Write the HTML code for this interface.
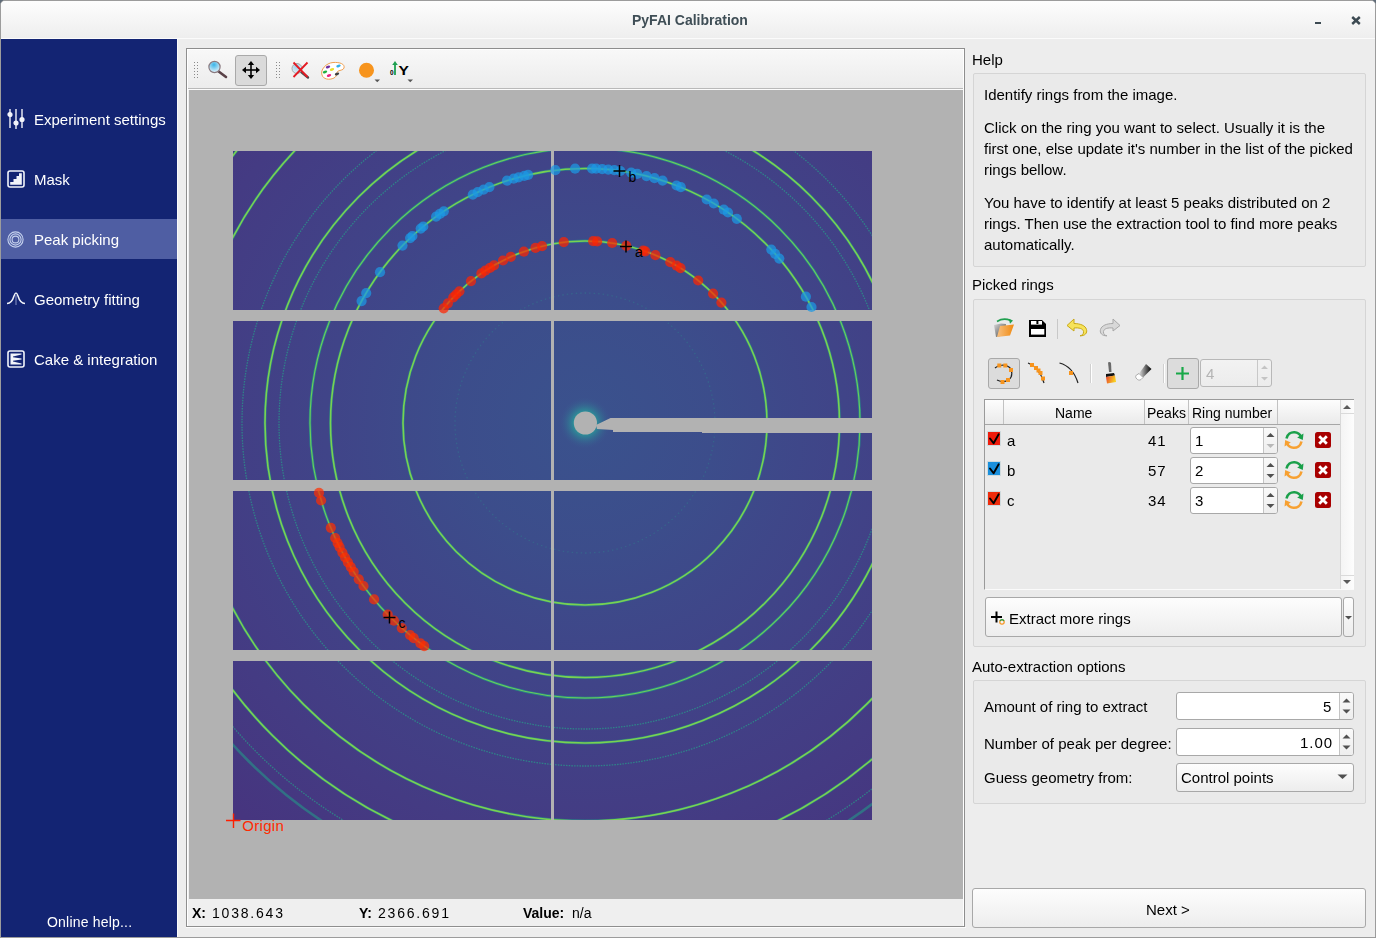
<!DOCTYPE html><html><head><meta charset="utf-8"><style>
html,body{margin:0;padding:0;}
body{width:1376px;height:938px;overflow:hidden;position:relative;background:#ededed;font-family:"Liberation Sans", sans-serif;}
.a{position:absolute;box-sizing:border-box;}
.t{position:absolute;white-space:pre;will-change:transform;}
svg{position:absolute;overflow:visible;}
</style></head><body>
<div class="a" style="left:0px;top:0px;width:1376px;height:938px;background:#5f6b78;"></div>
<div class="a" style="left:0px;top:0px;width:1376px;height:938px;background:#ededed;border:1px solid #9c9c9c;border-radius:5px 5px 0 0;"></div>
<div class="a" style="left:1px;top:1px;width:1374px;height:38px;background:linear-gradient(#fdfdfd,#eeeeee);border-radius:4px 4px 0 0;border-bottom:1px solid #fbfbfb;"></div>
<div class="t " style="left:632px;top:13.15px;font-size:14px;line-height:14px;color:#3f4e56;font-weight:bold;">PyFAI Calibration</div>
<div class="a" style="left:1315px;top:22px;width:6px;height:2px;background:#3c4a52;"></div>
<svg style="left:1351px;top:16px" width="10" height="9" viewBox="0 0 10 9"><path d="M1.2 1 L8.8 8 M8.8 1 L1.2 8" stroke="#3c4a52" stroke-width="2.4"/></svg>
<div class="a" style="left:1px;top:39px;width:176px;height:898px;background:#132473;"></div>
<div class="a" style="left:177px;top:39px;width:1px;height:898px;background:#fafafa;"></div>
<div class="a" style="left:1px;top:219px;width:176px;height:40px;background:#4f5ea3;"></div>
<div class="t " style="left:34px;top:112.30px;font-size:15px;line-height:15px;color:#ffffff;">Experiment settings</div>
<div class="t " style="left:34px;top:172.30px;font-size:15px;line-height:15px;color:#ffffff;">Mask</div>
<div class="t " style="left:34px;top:232.30px;font-size:15px;line-height:15px;color:#ffffff;">Peak picking</div>
<div class="t " style="left:34px;top:292.30px;font-size:15px;line-height:15px;color:#ffffff;">Geometry fitting</div>
<div class="t " style="left:34px;top:352.30px;font-size:15px;line-height:15px;color:#ffffff;">Cake &amp; integration</div>
<div class="t " style="left:47px;top:915.15px;font-size:14px;line-height:14px;color:#ffffff;letter-spacing:0.2px;">Online help...</div>
<svg style="left:7px;top:108px" width="18" height="22" viewBox="0 0 18 22">
<g stroke="#f2f4fa" stroke-width="1.4" fill="#f2f4fa">
<line x1="3" y1="1" x2="3" y2="20"/><line x1="9" y1="1" x2="9" y2="21"/><line x1="15" y1="1" x2="15" y2="20"/>
<circle cx="3" cy="6.5" r="1.9"/><circle cx="9" cy="15" r="1.9"/><circle cx="15" cy="11.5" r="1.9"/></g></svg>
<svg style="left:7px;top:170px" width="18" height="18" viewBox="0 0 18 18">
<rect x="1" y="1" width="16" height="16" rx="2" fill="none" stroke="#f2f4fa" stroke-width="1.6"/>
<path d="M3.2 14.8 L3.2 12 L6.5 12 L6.5 9 L9.5 9 L9.5 6 L12 6 L12 3.2 L14.8 3.2 L14.8 14.8 Z" fill="#f2f4fa"/></svg>
<svg style="left:7px;top:231px" width="17" height="17" viewBox="0 0 17 17">
<g fill="none" stroke="#c6d2ee" stroke-width="1.1"><circle cx="8.5" cy="8.5" r="7.6"/><circle cx="8.5" cy="8.5" r="5.6"/><circle cx="8.5" cy="8.5" r="3.4"/></g></svg>
<svg style="left:6px;top:291px" width="20" height="16" viewBox="0 0 20 16">
<path d="M1 12.5 C5 12.5 6.5 10 8 5 C9 2 9.5 2 10 2 C10.5 2 11 2 12 5 C13.5 10 15 12.5 19 12.5" fill="none" stroke="#f2f4fa" stroke-width="1.5"/>
<line x1="10" y1="4" x2="10" y2="14" stroke="#8a95c8" stroke-width="1"/></svg>
<svg style="left:7px;top:350px" width="18" height="18" viewBox="0 0 18 18">
<rect x="1" y="1" width="16" height="16" rx="2" fill="none" stroke="#f2f4fa" stroke-width="1.6"/>
<g fill="#f2f4fa"><rect x="3.5" y="3.5" width="2.5" height="11"/><path d="M6 3.5 L14.5 3.5 L14.5 4.6 L6 6.4 Z"/><path d="M6 7.2 L14.5 8.5 L14.5 9.5 L6 10.8 Z"/><path d="M6 11.6 L14.5 13.4 L14.5 14.5 L6 14.5 Z"/></g></svg>
<div class="a" style="left:186px;top:48px;width:779px;height:879px;border:1px solid #8e8e8e;background:#efefef;"></div>
<div class="a" style="left:187px;top:49px;width:777px;height:877px;border:1px solid #ffffff;border-bottom:none;"></div>
<div class="a" style="left:186px;top:927px;width:780px;height:1px;background:#fcfcfc;"></div>
<div class="a" style="left:188px;top:50px;width:775px;height:38px;background:linear-gradient(#f8f8f8,#ececec);"></div>
<div class="a" style="left:188px;top:88px;width:775px;height:1px;background:#b9b9b9;"></div>
<div class="a" style="left:188px;top:89px;width:775px;height:1px;background:#fbfbfb;"></div>
<div class="a" style="left:189px;top:90px;width:774px;height:809px;background:#b2b2b2;"></div>
<div class="a" style="left:194px;top:62px;width:1px;height:1px;background:#8a8a8a;"></div>
<div class="a" style="left:197px;top:62px;width:1px;height:1px;background:#8a8a8a;"></div>
<div class="a" style="left:194px;top:65px;width:1px;height:1px;background:#8a8a8a;"></div>
<div class="a" style="left:197px;top:65px;width:1px;height:1px;background:#8a8a8a;"></div>
<div class="a" style="left:194px;top:68px;width:1px;height:1px;background:#8a8a8a;"></div>
<div class="a" style="left:197px;top:68px;width:1px;height:1px;background:#8a8a8a;"></div>
<div class="a" style="left:194px;top:71px;width:1px;height:1px;background:#8a8a8a;"></div>
<div class="a" style="left:197px;top:71px;width:1px;height:1px;background:#8a8a8a;"></div>
<div class="a" style="left:194px;top:74px;width:1px;height:1px;background:#8a8a8a;"></div>
<div class="a" style="left:197px;top:74px;width:1px;height:1px;background:#8a8a8a;"></div>
<div class="a" style="left:194px;top:77px;width:1px;height:1px;background:#8a8a8a;"></div>
<div class="a" style="left:197px;top:77px;width:1px;height:1px;background:#8a8a8a;"></div>
<div class="a" style="left:276px;top:62px;width:1px;height:1px;background:#8a8a8a;"></div>
<div class="a" style="left:279px;top:62px;width:1px;height:1px;background:#8a8a8a;"></div>
<div class="a" style="left:276px;top:65px;width:1px;height:1px;background:#8a8a8a;"></div>
<div class="a" style="left:279px;top:65px;width:1px;height:1px;background:#8a8a8a;"></div>
<div class="a" style="left:276px;top:68px;width:1px;height:1px;background:#8a8a8a;"></div>
<div class="a" style="left:279px;top:68px;width:1px;height:1px;background:#8a8a8a;"></div>
<div class="a" style="left:276px;top:71px;width:1px;height:1px;background:#8a8a8a;"></div>
<div class="a" style="left:279px;top:71px;width:1px;height:1px;background:#8a8a8a;"></div>
<div class="a" style="left:276px;top:74px;width:1px;height:1px;background:#8a8a8a;"></div>
<div class="a" style="left:279px;top:74px;width:1px;height:1px;background:#8a8a8a;"></div>
<div class="a" style="left:276px;top:77px;width:1px;height:1px;background:#8a8a8a;"></div>
<div class="a" style="left:279px;top:77px;width:1px;height:1px;background:#8a8a8a;"></div>
<div class="a" style="left:235px;top:55px;width:32px;height:31px;background:#dadada;border:1px solid #a9a9a9;border-radius:3px;"></div>
<svg style="left:206px;top:58px" width="24" height="22" viewBox="0 0 24 22">
<defs><radialGradient id="mg" cx="0.45" cy="0.3" r="0.7"><stop offset="0" stop-color="#3ab4e8"/><stop offset="1" stop-color="#e8f4fb"/></radialGradient></defs>
<line x1="12" y1="13" x2="20" y2="19" stroke="#5a4248" stroke-width="2.6" stroke-linecap="round"/>
<circle cx="8.5" cy="9" r="5.6" fill="url(#mg)" stroke="#8a7a80" stroke-width="1.2"/></svg>
<svg style="left:241px;top:60px" width="20" height="20" viewBox="0 0 20 20">
<g stroke="#000" stroke-width="1.6"><line x1="10" y1="3" x2="10" y2="17"/><line x1="3" y1="10" x2="17" y2="10"/></g>
<g fill="#000"><path d="M10 1 L13.2 5 L6.8 5 Z"/><path d="M10 19 L13.2 15 L6.8 15 Z"/><path d="M1 10 L5 6.8 L5 13.2 Z"/><path d="M19 10 L15 6.8 L15 13.2 Z"/></g></svg>
<svg style="left:290px;top:60px" width="22" height="22" viewBox="0 0 22 22">
<defs><radialGradient id="mg2" cx="0.45" cy="0.3" r="0.7"><stop offset="0" stop-color="#9cd0ec"/><stop offset="1" stop-color="#e6f0f6"/></radialGradient></defs>
<line x1="10" y1="11" x2="18" y2="17.5" stroke="#4a4a4a" stroke-width="2.4" stroke-linecap="round"/>
<circle cx="7" cy="8.5" r="5" fill="url(#mg2)" stroke="#a8a8a8" stroke-width="1"/>
<path d="M3.5 2.5 L17.5 17 M17.5 2.5 L3.5 17" stroke="#e41b23" stroke-width="1.8"/></svg>
<svg style="left:320px;top:61px" width="26" height="20" viewBox="0 0 26 20">
<path d="M2 14 C0 9 6 2 13 1.5 C20 1 25 3 24 7 C23.5 9.5 19 9 17.5 10.5 C16 12 18 14.5 14 17 C9 19.5 3 18 2 14 Z" fill="#fff" stroke="#f0a050" stroke-width="1"/>
<ellipse cx="8" cy="6" rx="2.3" ry="1.2" fill="#7030a0" transform="rotate(-20 8 6)"/>
<ellipse cx="18.5" cy="5" rx="2.3" ry="1.2" fill="#30b0e8" transform="rotate(-20 18.5 5)"/>
<ellipse cx="12" cy="8.5" rx="2.3" ry="1.2" fill="#e8e030" transform="rotate(-20 12 8.5)"/>
<ellipse cx="5" cy="11" rx="2.3" ry="1.2" fill="#20b040" transform="rotate(-20 5 11)"/>
<ellipse cx="17" cy="13" rx="2.3" ry="1.2" fill="#404040" transform="rotate(-20 17 13)"/>
<ellipse cx="9" cy="14.5" rx="2.3" ry="1.2" fill="#e82080" transform="rotate(-20 9 14.5)"/></svg>
<svg style="left:356px;top:60px" width="30" height="26" viewBox="0 0 30 26">
<circle cx="10.5" cy="10.3" r="7.5" fill="#f7941d"/>
<path d="M18.5 19.5 L24 19.5 L21.25 22.3 Z" fill="#555"/></svg>
<svg style="left:386px;top:58px" width="30" height="28" viewBox="0 0 30 28">
<text x="3.9" y="17" font-family="Liberation Sans" font-size="6.5" font-weight="bold" fill="#000">0</text>
<line x1="9" y1="6" x2="9" y2="17" stroke="#1ea050" stroke-width="1.8"/><path d="M9 3 L11.8 7 L6.2 7 Z" fill="#1ea050"/>
<text transform="translate(12.6 17.2) scale(1.2 1)" x="0" y="0" font-family="Liberation Sans" font-size="13" font-weight="bold" fill="#000">Y</text>
<path d="M21.5 21.5 L27 21.5 L24.25 24.3 Z" fill="#555"/></svg>
<div class="t " style="left:192px;top:906.15px;font-size:14px;line-height:14px;color:#000;font-weight:bold;">X:</div>
<div class="t " style="left:212px;top:906.15px;font-size:14px;line-height:14px;color:#000;letter-spacing:1.8px;">1038.643</div>
<div class="t " style="left:359px;top:906.15px;font-size:14px;line-height:14px;color:#000;font-weight:bold;">Y:</div>
<div class="t " style="left:378px;top:906.15px;font-size:14px;line-height:14px;color:#000;letter-spacing:1.8px;">2366.691</div>
<div class="t " style="left:523px;top:906.15px;font-size:14px;line-height:14px;color:#000;font-weight:bold;">Value:</div>
<div class="t " style="left:572px;top:906.15px;font-size:14px;line-height:14px;color:#000;">n/a</div>
<svg style="left:189px;top:90px" width="774" height="809" viewBox="189 90 774 809">
<defs>
<clipPath id="pan"><rect x="233" y="151" width="318" height="159"/><rect x="233" y="321" width="318" height="159"/><rect x="233" y="491" width="318" height="159"/><rect x="233" y="661" width="318" height="159"/><rect x="554" y="151" width="318" height="159"/><rect x="554" y="321" width="318" height="159"/><rect x="554" y="491" width="318" height="159"/><rect x="554" y="661" width="318" height="159"/></clipPath>
<radialGradient id="bgg" gradientUnits="userSpaceOnUse" cx="585" cy="423" r="520"><stop offset="0" stop-color="#3a528d"/><stop offset="0.25" stop-color="#3c4d8b"/><stop offset="0.5" stop-color="#404488"/><stop offset="0.8" stop-color="#443b83"/><stop offset="1" stop-color="#46357f"/></radialGradient>
<radialGradient id="glow" gradientUnits="userSpaceOnUse" cx="585" cy="423" r="26"><stop offset="0.3" stop-color="#36c0a8" stop-opacity="1"/><stop offset="0.45" stop-color="#2a9a9a" stop-opacity="0.8"/><stop offset="1" stop-color="#3c5690" stop-opacity="0"/></radialGradient>
</defs>
<g clip-path="url(#pan)">
<rect x="233" y="151" width="639" height="669" fill="url(#bgg)"/>
<circle cx="585" cy="423" r="130" fill="none" stroke="#2a9a8e" stroke-width="1.3" stroke-opacity="0.28" stroke-dasharray="1.5 3"/>
<circle cx="585" cy="423" r="182" fill="none" stroke="#1f9e89" stroke-width="2.8" stroke-opacity="0.6"/>
<circle cx="585" cy="423" r="182" fill="none" stroke="#7ad151" stroke-width="1.6"/>
<circle cx="585" cy="423" r="254.5" fill="none" stroke="#1f9e89" stroke-width="2.8" stroke-opacity="0.6"/>
<circle cx="585" cy="423" r="254.5" fill="none" stroke="#7ad151" stroke-width="1.6"/>
<circle cx="585" cy="423" r="275" fill="none" stroke="#1fa088" stroke-width="2.6" stroke-opacity="0.7"/>
<circle cx="585" cy="423" r="275" fill="none" stroke="#6ccd5a" stroke-width="1.1"/>
<circle cx="585" cy="423" r="306" fill="none" stroke="#26a08a" stroke-width="1.3" stroke-opacity="0.7" stroke-dasharray="1.5 1.2"/>
<circle cx="585" cy="423" r="320" fill="none" stroke="#1f9e89" stroke-width="2.8" stroke-opacity="0.6"/>
<circle cx="585" cy="423" r="320" fill="none" stroke="#7ad151" stroke-width="1.6"/>
<circle cx="585" cy="423" r="343" fill="none" stroke="#26a08a" stroke-width="1.3" stroke-opacity="0.7" stroke-dasharray="1.5 1.2"/>
<circle cx="585" cy="423" r="398" fill="none" stroke="#1f9e89" stroke-width="2.8" stroke-opacity="0.6"/>
<circle cx="585" cy="423" r="398" fill="none" stroke="#7ad151" stroke-width="1.6"/>
<circle cx="585" cy="423" r="442" fill="none" stroke="#1f9e89" stroke-width="2.8" stroke-opacity="0.6"/>
<circle cx="585" cy="423" r="442" fill="none" stroke="#7ad151" stroke-width="1.6"/>
<circle cx="585" cy="423" r="465" fill="none" stroke="#26a08a" stroke-width="1.3" stroke-opacity="0.7" stroke-dasharray="1.5 1.2"/>
<circle cx="585" cy="423" r="477" fill="none" stroke="#20a088" stroke-width="2.6" stroke-opacity="0.55"/>
<circle cx="585" cy="423" r="26" fill="url(#glow)"/>
<circle cx="585.4" cy="423" r="11.6" fill="#b2b2b2"/>
<path d="M596 425 L610.5 418 L872 418 L872 433 L702 433 L702 432 L613 432 L613 430 L597 429 Z" fill="#b2b2b2"/>
</g>
<circle cx="361.6" cy="301.1" r="5.1" fill="#1c98e4" fill-opacity="0.72"/>
<circle cx="366.2" cy="293.1" r="5.1" fill="#1c98e4" fill-opacity="0.72"/>
<circle cx="380.0" cy="272.2" r="5.1" fill="#1c98e4" fill-opacity="0.72"/>
<circle cx="402.5" cy="245.6" r="5.1" fill="#1c98e4" fill-opacity="0.72"/>
<circle cx="410.1" cy="238.1" r="5.1" fill="#1c98e4" fill-opacity="0.72"/>
<circle cx="412.4" cy="236.0" r="5.1" fill="#1c98e4" fill-opacity="0.72"/>
<circle cx="420.7" cy="228.6" r="5.1" fill="#1c98e4" fill-opacity="0.72"/>
<circle cx="423.3" cy="226.5" r="5.1" fill="#1c98e4" fill-opacity="0.72"/>
<circle cx="436.1" cy="216.6" r="5.1" fill="#1c98e4" fill-opacity="0.72"/>
<circle cx="439.9" cy="213.9" r="5.1" fill="#1c98e4" fill-opacity="0.72"/>
<circle cx="443.8" cy="211.3" r="5.1" fill="#1c98e4" fill-opacity="0.72"/>
<circle cx="472.8" cy="194.6" r="5.1" fill="#1c98e4" fill-opacity="0.72"/>
<circle cx="477.7" cy="192.2" r="5.1" fill="#1c98e4" fill-opacity="0.72"/>
<circle cx="483.6" cy="189.6" r="5.1" fill="#1c98e4" fill-opacity="0.72"/>
<circle cx="489.4" cy="187.1" r="5.1" fill="#1c98e4" fill-opacity="0.72"/>
<circle cx="507.0" cy="180.7" r="5.1" fill="#1c98e4" fill-opacity="0.72"/>
<circle cx="513.7" cy="178.7" r="5.1" fill="#1c98e4" fill-opacity="0.72"/>
<circle cx="518.6" cy="177.3" r="5.1" fill="#1c98e4" fill-opacity="0.72"/>
<circle cx="524.3" cy="175.9" r="5.1" fill="#1c98e4" fill-opacity="0.72"/>
<circle cx="528.1" cy="174.9" r="5.1" fill="#1c98e4" fill-opacity="0.72"/>
<circle cx="555.4" cy="170.2" r="5.1" fill="#1c98e4" fill-opacity="0.72"/>
<circle cx="575.1" cy="168.7" r="5.1" fill="#1c98e4" fill-opacity="0.72"/>
<circle cx="592.1" cy="168.6" r="5.1" fill="#1c98e4" fill-opacity="0.72"/>
<circle cx="596.1" cy="168.7" r="5.1" fill="#1c98e4" fill-opacity="0.72"/>
<circle cx="602.2" cy="169.1" r="5.1" fill="#1c98e4" fill-opacity="0.72"/>
<circle cx="608.3" cy="169.6" r="5.1" fill="#1c98e4" fill-opacity="0.72"/>
<circle cx="614.3" cy="170.2" r="5.1" fill="#1c98e4" fill-opacity="0.72"/>
<circle cx="620.3" cy="171.0" r="5.1" fill="#1c98e4" fill-opacity="0.72"/>
<circle cx="631.2" cy="172.7" r="5.1" fill="#1c98e4" fill-opacity="0.72"/>
<circle cx="637.2" cy="173.9" r="5.1" fill="#1c98e4" fill-opacity="0.72"/>
<circle cx="646.5" cy="176.1" r="5.1" fill="#1c98e4" fill-opacity="0.72"/>
<circle cx="654.5" cy="178.2" r="5.1" fill="#1c98e4" fill-opacity="0.72"/>
<circle cx="662.6" cy="180.6" r="5.1" fill="#1c98e4" fill-opacity="0.72"/>
<circle cx="676.5" cy="185.5" r="5.1" fill="#1c98e4" fill-opacity="0.72"/>
<circle cx="680.8" cy="187.2" r="5.1" fill="#1c98e4" fill-opacity="0.72"/>
<circle cx="706.7" cy="199.5" r="5.1" fill="#1c98e4" fill-opacity="0.72"/>
<circle cx="713.8" cy="203.5" r="5.1" fill="#1c98e4" fill-opacity="0.72"/>
<circle cx="723.8" cy="209.7" r="5.1" fill="#1c98e4" fill-opacity="0.72"/>
<circle cx="728.0" cy="212.5" r="5.1" fill="#1c98e4" fill-opacity="0.72"/>
<circle cx="736.8" cy="218.8" r="5.1" fill="#1c98e4" fill-opacity="0.72"/>
<circle cx="771.3" cy="249.6" r="5.1" fill="#1c98e4" fill-opacity="0.72"/>
<circle cx="775.1" cy="253.8" r="5.1" fill="#1c98e4" fill-opacity="0.72"/>
<circle cx="779.3" cy="258.6" r="5.1" fill="#1c98e4" fill-opacity="0.72"/>
<circle cx="805.9" cy="296.7" r="5.1" fill="#1c98e4" fill-opacity="0.72"/>
<circle cx="811.5" cy="307.0" r="5.1" fill="#1c98e4" fill-opacity="0.72"/>
<circle cx="443.7" cy="308.3" r="5.1" fill="#ff2400" fill-opacity="0.72"/>
<circle cx="447.9" cy="303.3" r="5.1" fill="#ff2400" fill-opacity="0.72"/>
<circle cx="453.3" cy="297.3" r="5.1" fill="#ff2400" fill-opacity="0.72"/>
<circle cx="456.1" cy="294.5" r="5.1" fill="#ff2400" fill-opacity="0.72"/>
<circle cx="459.4" cy="291.3" r="5.1" fill="#ff2400" fill-opacity="0.72"/>
<circle cx="471.0" cy="281.1" r="5.1" fill="#ff2400" fill-opacity="0.72"/>
<circle cx="481.4" cy="273.4" r="5.1" fill="#ff2400" fill-opacity="0.72"/>
<circle cx="485.3" cy="270.7" r="5.1" fill="#ff2400" fill-opacity="0.72"/>
<circle cx="490.0" cy="267.8" r="5.1" fill="#ff2400" fill-opacity="0.72"/>
<circle cx="494.0" cy="265.4" r="5.1" fill="#ff2400" fill-opacity="0.72"/>
<circle cx="503.0" cy="260.5" r="5.1" fill="#ff2400" fill-opacity="0.72"/>
<circle cx="510.8" cy="256.8" r="5.1" fill="#ff2400" fill-opacity="0.72"/>
<circle cx="523.9" cy="251.6" r="5.1" fill="#ff2400" fill-opacity="0.72"/>
<circle cx="535.5" cy="247.9" r="5.1" fill="#ff2400" fill-opacity="0.72"/>
<circle cx="542.1" cy="246.1" r="5.1" fill="#ff2400" fill-opacity="0.72"/>
<circle cx="563.8" cy="242.2" r="5.1" fill="#ff2400" fill-opacity="0.72"/>
<circle cx="593.2" cy="241.2" r="5.1" fill="#ff2400" fill-opacity="0.72"/>
<circle cx="597.2" cy="241.4" r="5.1" fill="#ff2400" fill-opacity="0.72"/>
<circle cx="612.2" cy="243.0" r="5.1" fill="#ff2400" fill-opacity="0.72"/>
<circle cx="626.3" cy="245.8" r="5.1" fill="#ff2400" fill-opacity="0.72"/>
<circle cx="643.2" cy="250.6" r="5.1" fill="#ff2400" fill-opacity="0.72"/>
<circle cx="645.3" cy="251.3" r="5.1" fill="#ff2400" fill-opacity="0.72"/>
<circle cx="655.4" cy="255.2" r="5.1" fill="#ff2400" fill-opacity="0.72"/>
<circle cx="670.3" cy="262.2" r="5.1" fill="#ff2400" fill-opacity="0.72"/>
<circle cx="676.6" cy="265.7" r="5.1" fill="#ff2400" fill-opacity="0.72"/>
<circle cx="680.5" cy="268.1" r="5.1" fill="#ff2400" fill-opacity="0.72"/>
<circle cx="698.2" cy="280.5" r="5.1" fill="#ff2400" fill-opacity="0.72"/>
<circle cx="713.1" cy="293.7" r="5.1" fill="#ff2400" fill-opacity="0.72"/>
<circle cx="721.4" cy="302.6" r="5.1" fill="#ff2400" fill-opacity="0.72"/>
<circle cx="319.0" cy="492.8" r="5.1" fill="#ff2e00" fill-opacity="0.72"/>
<circle cx="321.1" cy="500.5" r="5.1" fill="#ff2e00" fill-opacity="0.72"/>
<circle cx="330.8" cy="527.8" r="5.1" fill="#ff2e00" fill-opacity="0.72"/>
<circle cx="335.2" cy="538.0" r="5.1" fill="#ff2e00" fill-opacity="0.72"/>
<circle cx="337.6" cy="543.0" r="5.1" fill="#ff2e00" fill-opacity="0.72"/>
<circle cx="339.6" cy="547.1" r="5.1" fill="#ff2e00" fill-opacity="0.72"/>
<circle cx="342.4" cy="552.6" r="5.1" fill="#ff2e00" fill-opacity="0.72"/>
<circle cx="345.1" cy="557.5" r="5.1" fill="#ff2e00" fill-opacity="0.72"/>
<circle cx="347.9" cy="562.3" r="5.1" fill="#ff2e00" fill-opacity="0.72"/>
<circle cx="350.8" cy="567.1" r="5.1" fill="#ff2e00" fill-opacity="0.72"/>
<circle cx="353.7" cy="571.8" r="5.1" fill="#ff2e00" fill-opacity="0.72"/>
<circle cx="358.8" cy="579.3" r="5.1" fill="#ff2e00" fill-opacity="0.72"/>
<circle cx="363.5" cy="586.0" r="5.1" fill="#ff2e00" fill-opacity="0.72"/>
<circle cx="374.1" cy="599.4" r="5.1" fill="#ff2e00" fill-opacity="0.72"/>
<circle cx="387.7" cy="614.5" r="5.1" fill="#ff2e00" fill-opacity="0.72"/>
<circle cx="393.9" cy="620.7" r="5.1" fill="#ff2e00" fill-opacity="0.72"/>
<circle cx="401.8" cy="628.1" r="5.1" fill="#ff2e00" fill-opacity="0.72"/>
<circle cx="410.1" cy="635.2" r="5.1" fill="#ff2e00" fill-opacity="0.72"/>
<circle cx="413.8" cy="638.2" r="5.1" fill="#ff2e00" fill-opacity="0.72"/>
<circle cx="420.4" cy="643.3" r="5.1" fill="#ff2e00" fill-opacity="0.72"/>
<circle cx="424.2" cy="646.1" r="5.1" fill="#ff2e00" fill-opacity="0.72"/>
<path d="M613.5 171 H625.5 M619.5 165 V177" stroke="#000" stroke-width="1.5"/>
<text x="628.5" y="181.5" font-family="Liberation Sans" font-size="14" fill="#000">b</text>
<path d="M620 246.5 H632 M626 240.5 V252.5" stroke="#000" stroke-width="1.5"/>
<text x="635" y="257.0" font-family="Liberation Sans" font-size="14" fill="#000">a</text>
<path d="M383.5 617.5 H395.5 M389.5 611.5 V623.5" stroke="#000" stroke-width="1.5"/>
<text x="398.5" y="628.0" font-family="Liberation Sans" font-size="14" fill="#000">c</text>
<path d="M226 820.5 H240.5 M233.5 813.5 V828" stroke="#ff1e00" stroke-width="1.4"/>
<text x="242.3" y="831" font-family="Liberation Sans" font-size="15" fill="#ff2a00" letter-spacing="0.3">Origin</text>
</svg>
<div class="t " style="left:972px;top:52.30px;font-size:15px;line-height:15px;color:#000;">Help</div>
<div class="a" style="left:973px;top:73px;width:393px;height:194px;background:#eaeaea;border:1px solid #d5d5d5;border-radius:2px;"></div>
<div class="t " style="left:984.2px;top:87.30px;font-size:15px;line-height:15px;color:#000;">Identify rings from the image.</div>
<div class="t " style="left:984.2px;top:120.30px;font-size:15px;line-height:15px;color:#000;">Click on the ring you want to select. Usually it is the</div>
<div class="t " style="left:984.2px;top:141.30px;font-size:15px;line-height:15px;color:#000;">first one, else update it's number in the list of the picked</div>
<div class="t " style="left:984.2px;top:162.30px;font-size:15px;line-height:15px;color:#000;">rings bellow.</div>
<div class="t " style="left:984.2px;top:195.30px;font-size:15px;line-height:15px;color:#000;">You have to identify at least 5 peaks distributed on 2</div>
<div class="t " style="left:984.2px;top:216.30px;font-size:15px;line-height:15px;color:#000;">rings. Then use the extraction tool to find more peaks</div>
<div class="t " style="left:984.2px;top:237.30px;font-size:15px;line-height:15px;color:#000;">automatically.</div>
<div class="t " style="left:972px;top:277.30px;font-size:15px;line-height:15px;color:#000;">Picked rings</div>
<div class="a" style="left:973px;top:299px;width:393px;height:348px;background:#eaeaea;border:1px solid #d5d5d5;border-radius:2px;"></div>
<svg style="left:992px;top:316px" width="24" height="24" viewBox="0 0 24 24">
<defs><linearGradient id="fo" x1="0" y1="0" x2="1" y2="0"><stop offset="0" stop-color="#f8c080"/><stop offset="1" stop-color="#f08a10"/></linearGradient>
<linearGradient id="fb" x1="0" y1="0" x2="1" y2="1"><stop offset="0" stop-color="#d8d8d8"/><stop offset="1" stop-color="#404040"/></linearGradient></defs>
<path d="M2 9 L9 7.5 L14 8 L13 19 L4 21 Z" fill="url(#fb)"/>
<path d="M5 21 L8 10 L22 8.5 L18 19.5 Z" fill="url(#fo)"/>
<path d="M5 5.5 C9 3 14 2.5 18.5 4.5" fill="none" stroke="#20a050" stroke-width="1.6"/><path d="M21 4.5 L18 7.8 L16.8 2.8 Z" fill="#20a050"/></svg>
<svg style="left:1029px;top:320px" width="17" height="17" viewBox="0 0 17 17">
<path d="M0 0 H13 L17 4 V17 H0 Z" fill="#000"/><rect x="2" y="9" width="13.3" height="5.6" fill="#fff"/><rect x="2" y="1" width="11" height="3.6" fill="#fff"/><rect x="7.4" y="1" width="2" height="3" fill="#000"/></svg>
<div class="a" style="left:1057px;top:319px;width:1px;height:20px;background:#c8c8c8;"></div>
<svg style="left:1065px;top:317px" width="24" height="20" viewBox="0 0 24 20">
<path d="M9 2 L2 8.5 L9 14 L9 11 C14 10.5 18 11.5 18.5 14.5 C19 17 17 18.5 15 18.8 C20 19 22.5 16 21.5 12.5 C20.5 8.5 15 6.5 9 6.5 Z" fill="#f6e35a" stroke="#c8a818" stroke-width="1"/></svg>
<svg style="left:1098px;top:317px" width="24" height="20" viewBox="0 0 24 20" style="opacity:0.6">
<path d="M15 2 L22 8.5 L15 14 L15 11 C10 10.5 6 11.5 5.5 14.5 C5 17 7 18.5 9 18.8 C4 19 1.5 16 2.5 12.5 C3.5 8.5 9 6.5 15 6.5 Z" fill="#d8d8d8" stroke="#a8a8a8" stroke-width="1"/></svg>
<div class="a" style="left:988px;top:358px;width:32px;height:31px;background:#dcdcdc;border:1px solid #a9a9a9;border-radius:3px;"></div>
<svg style="left:992px;top:361px" width="24" height="24" viewBox="0 0 24 24">
<path d="M3 7 C6 4 13 3 17 6 C21 9 20.5 16 17 18.5 C14 21 9 21 5 19" fill="none" stroke="#222" stroke-width="1.2"/>
<g fill="#f7941d"><rect x="5.3" y="2.5" width="4" height="4"/><rect x="11.3" y="2.5" width="4" height="4"/><rect x="17" y="7" width="4" height="4"/><rect x="14" y="17" width="4" height="4"/><rect x="8.5" y="19" width="4" height="4"/></g></svg>
<svg style="left:1025px;top:361px" width="24" height="24" viewBox="0 0 24 24">
<path d="M3 2 C9 4 15 9 19 22" fill="none" stroke="#222" stroke-width="1.2"/>
<g fill="#f7941d"><rect x="5" y="2" width="4" height="4"/><rect x="9" y="5" width="4" height="4"/><rect x="11.5" y="7.5" width="4" height="4"/><rect x="13.5" y="10" width="4" height="4"/><rect x="16" y="15.5" width="4" height="4"/></g></svg>
<svg style="left:1058px;top:361px" width="24" height="24" viewBox="0 0 24 24">
<path d="M1.5 2 C9 4 16 9 20 22" fill="none" stroke="#222" stroke-width="1.2"/>
<rect x="11" y="10" width="4" height="4" fill="#f7941d"/></svg>
<div class="a" style="left:1091px;top:364px;width:1px;height:19px;background:#ffffff;"></div>
<div class="a" style="left:1090px;top:364px;width:1px;height:19px;background:#d0d0d0;"></div>
<svg style="left:1103px;top:361px" width="14" height="24" viewBox="0 0 14 24">
<defs><linearGradient id="br" x1="0" y1="0" x2="1" y2="0.3"><stop offset="0" stop-color="#e84030"/><stop offset="1" stop-color="#f8d020"/></linearGradient></defs>
<path d="M5 1.5 C6 0.5 7.5 0.8 8 2 L8.5 11 L6 11 Z" fill="#6a6a6a"/>
<path d="M3 13 L11 12 L12 14.5 L3 16 Z" fill="#111"/>
<path d="M3 16 L12 14.5 L13 21 L4 22.5 Z" fill="url(#br)"/></svg>
<svg style="left:1134px;top:362px" width="20" height="20" viewBox="0 0 20 20">
<defs><linearGradient id="er" x1="0" y1="0" x2="1" y2="0"><stop offset="0" stop-color="#e0e0e0"/><stop offset="1" stop-color="#000"/></linearGradient></defs>
<path d="M12 2 L17.5 7 L9 15.5 L5 11.5 Z" fill="url(#er)"/>
<path d="M5 11.5 L9 15.5 L7 17.5 C6 18.3 4.5 18.3 3.5 17.5 L2 16 C1.5 15 1.6 14 2.3 13.2 Z" fill="#fff" stroke="#999" stroke-width="0.8"/></svg>
<div class="a" style="left:1164px;top:364px;width:1px;height:19px;background:#ffffff;"></div>
<div class="a" style="left:1163px;top:364px;width:1px;height:19px;background:#d0d0d0;"></div>
<div class="a" style="left:1167px;top:358px;width:32px;height:31px;background:#dcdcdc;border:1px solid #a9a9a9;border-radius:3px;"></div>
<svg style="left:1175px;top:366px" width="15" height="15" viewBox="0 0 15 15"><path d="M7.5 1 V14 M1 7.5 H14" stroke="#18a848" stroke-width="2.2"/></svg>
<div class="a" style="left:1200px;top:359px;width:72px;height:28px;background:linear-gradient(#f2f2f2,#ececec);border:1px solid #b8b8b8;border-radius:3px;"></div>
<div class="a" style="left:1257px;top:360px;width:1px;height:26px;background:#c8c8c8;"></div>
<div class="t " style="left:1206px;top:366.30px;font-size:15px;line-height:15px;color:#b4b4b4;">4</div>
<svg style="left:1258px;top:360px" width="13" height="26" viewBox="0 0 13 26"><path d="M3 9 L10 9 L6.5 5.5 Z M3 17 L10 17 L6.5 20.5 Z" fill="#c4c4c4"/></svg>
<div class="a" style="left:984px;top:399px;width:370px;height:191px;background:#eaeaea;border:1px solid #9a9a9a;border-bottom-color:#fafafa;border-right:none;"></div>
<div class="a" style="left:985px;top:400px;width:355px;height:25px;background:linear-gradient(#fdfdfd,#eaeaea);border-bottom:1px solid #a6a6a6;"></div>
<div class="a" style="left:1003px;top:400px;width:1px;height:24px;background:#c2c2c2;"></div>
<div class="a" style="left:1144px;top:400px;width:1px;height:24px;background:#c2c2c2;"></div>
<div class="a" style="left:1188px;top:400px;width:1px;height:24px;background:#c2c2c2;"></div>
<div class="a" style="left:1277px;top:400px;width:1px;height:24px;background:#c2c2c2;"></div>
<div class="t " style="left:1055px;top:406.15px;font-size:14px;line-height:14px;color:#000;">Name</div>
<div class="t " style="left:1147px;top:406.15px;font-size:14px;line-height:14px;color:#000;">Peaks</div>
<div class="t " style="left:1192px;top:406.15px;font-size:14px;line-height:14px;color:#000;">Ring number</div>
<div class="a" style="left:1340px;top:400px;width:14px;height:189px;background:linear-gradient(90deg,#f4f4f4,#fdfdfd);border-left:1px solid #d8d8d8;"></div>
<div class="a" style="left:1341px;top:413px;width:13px;height:1px;background:#dadada;"></div>
<div class="a" style="left:1341px;top:575px;width:13px;height:1px;background:#dadada;"></div>
<svg style="left:1340px;top:400px" width="14" height="189" viewBox="0 0 14 189"><path d="M3 9 L11 9 L7 5 Z M3 180 L11 180 L7 184 Z" fill="#5a5a5a"/></svg>
<div class="a" style="left:987px;top:431px;width:14px;height:15px;background:#ee1c0c;border:1px solid #cfdadd;"></div>
<svg style="left:988px;top:432px" width="12" height="13" viewBox="0 0 12 13"><path d="M2 6.5 L5.6 11.3 L10.7 2.3" fill="none" stroke="#000" stroke-width="1.9" stroke-linejoin="round" stroke-linecap="round"/></svg>
<div class="t " style="left:1007px;top:433.30px;font-size:15px;line-height:15px;color:#000;">a</div>
<div class="t " style="left:1148px;top:433.30px;font-size:15px;line-height:15px;color:#000;letter-spacing:1px;">41</div>
<div class="a" style="left:1190px;top:427px;width:88px;height:27px;background:#fff;border:1px solid #a8a8a8;border-radius:3px;"></div>
<div class="a" style="left:1263px;top:428px;width:1px;height:25px;background:#c4c4c4;"></div>
<div class="a" style="left:1264px;top:428px;width:13px;height:25px;background:linear-gradient(#fafafa,#eeeeee);border-radius:0 2px 2px 0;"></div>
<svg style="left:1264px;top:428px" width="13" height="25" viewBox="0 0 13 25"><path d="M2.5 9 L10.5 9 L6.5 5 Z" fill="#505050"/><path d="M2.5 16 L10.5 16 L6.5 20 Z" fill="#b8b8b8"/></svg>
<div class="t " style="left:1195px;top:433.30px;font-size:15px;line-height:15px;color:#000;">1</div>
<svg style="left:1284px;top:430px" width="20" height="20" viewBox="0 0 20 20">
<path d="M2.5 8.5 C3.5 4 7 2 10.5 2.2 C13.5 2.4 15.8 4 17 6.5" fill="none" stroke="#1aa04a" stroke-width="2.6"/><path d="M19.5 3.5 L18.8 10 L13.2 7.5 Z" fill="#1aa04a"/>
<path d="M17.5 11.5 C16.5 16 13 18 9.5 17.8 C6.5 17.6 4.2 16 3 13.5" fill="none" stroke="#f7a030" stroke-width="2.6"/><path d="M0.5 16.5 L1.2 10 L6.8 12.5 Z" fill="#f7a030"/></svg>
<svg style="left:1315px;top:432px" width="16" height="16" viewBox="0 0 16 16">
<rect x="0" y="0" width="16" height="16" rx="2.5" fill="#a80000"/><path d="M4.2 4.2 L11.8 11.8 M11.8 4.2 L4.2 11.8" stroke="#fff" stroke-width="2.8"/></svg>
<div class="a" style="left:987px;top:461px;width:14px;height:15px;background:#1a8fdc;border:1px solid #cfdadd;"></div>
<svg style="left:988px;top:462px" width="12" height="13" viewBox="0 0 12 13"><path d="M2 6.5 L5.6 11.3 L10.7 2.3" fill="none" stroke="#000" stroke-width="1.9" stroke-linejoin="round" stroke-linecap="round"/></svg>
<div class="t " style="left:1007px;top:463.30px;font-size:15px;line-height:15px;color:#000;">b</div>
<div class="t " style="left:1148px;top:463.30px;font-size:15px;line-height:15px;color:#000;letter-spacing:1px;">57</div>
<div class="a" style="left:1190px;top:457px;width:88px;height:27px;background:#fff;border:1px solid #a8a8a8;border-radius:3px;"></div>
<div class="a" style="left:1263px;top:458px;width:1px;height:25px;background:#c4c4c4;"></div>
<div class="a" style="left:1264px;top:458px;width:13px;height:25px;background:linear-gradient(#fafafa,#eeeeee);border-radius:0 2px 2px 0;"></div>
<svg style="left:1264px;top:458px" width="13" height="25" viewBox="0 0 13 25"><path d="M2.5 9 L10.5 9 L6.5 5 Z" fill="#505050"/><path d="M2.5 16 L10.5 16 L6.5 20 Z" fill="#505050"/></svg>
<div class="t " style="left:1195px;top:463.30px;font-size:15px;line-height:15px;color:#000;">2</div>
<svg style="left:1284px;top:460px" width="20" height="20" viewBox="0 0 20 20">
<path d="M2.5 8.5 C3.5 4 7 2 10.5 2.2 C13.5 2.4 15.8 4 17 6.5" fill="none" stroke="#1aa04a" stroke-width="2.6"/><path d="M19.5 3.5 L18.8 10 L13.2 7.5 Z" fill="#1aa04a"/>
<path d="M17.5 11.5 C16.5 16 13 18 9.5 17.8 C6.5 17.6 4.2 16 3 13.5" fill="none" stroke="#f7a030" stroke-width="2.6"/><path d="M0.5 16.5 L1.2 10 L6.8 12.5 Z" fill="#f7a030"/></svg>
<svg style="left:1315px;top:462px" width="16" height="16" viewBox="0 0 16 16">
<rect x="0" y="0" width="16" height="16" rx="2.5" fill="#a80000"/><path d="M4.2 4.2 L11.8 11.8 M11.8 4.2 L4.2 11.8" stroke="#fff" stroke-width="2.8"/></svg>
<div class="a" style="left:987px;top:491px;width:14px;height:15px;background:#ee2c0c;border:1px solid #cfdadd;"></div>
<svg style="left:988px;top:492px" width="12" height="13" viewBox="0 0 12 13"><path d="M2 6.5 L5.6 11.3 L10.7 2.3" fill="none" stroke="#000" stroke-width="1.9" stroke-linejoin="round" stroke-linecap="round"/></svg>
<div class="t " style="left:1007px;top:493.30px;font-size:15px;line-height:15px;color:#000;">c</div>
<div class="t " style="left:1148px;top:493.30px;font-size:15px;line-height:15px;color:#000;letter-spacing:1px;">34</div>
<div class="a" style="left:1190px;top:487px;width:88px;height:27px;background:#fff;border:1px solid #a8a8a8;border-radius:3px;"></div>
<div class="a" style="left:1263px;top:488px;width:1px;height:25px;background:#c4c4c4;"></div>
<div class="a" style="left:1264px;top:488px;width:13px;height:25px;background:linear-gradient(#fafafa,#eeeeee);border-radius:0 2px 2px 0;"></div>
<svg style="left:1264px;top:488px" width="13" height="25" viewBox="0 0 13 25"><path d="M2.5 9 L10.5 9 L6.5 5 Z" fill="#505050"/><path d="M2.5 16 L10.5 16 L6.5 20 Z" fill="#505050"/></svg>
<div class="t " style="left:1195px;top:493.30px;font-size:15px;line-height:15px;color:#000;">3</div>
<svg style="left:1284px;top:490px" width="20" height="20" viewBox="0 0 20 20">
<path d="M2.5 8.5 C3.5 4 7 2 10.5 2.2 C13.5 2.4 15.8 4 17 6.5" fill="none" stroke="#1aa04a" stroke-width="2.6"/><path d="M19.5 3.5 L18.8 10 L13.2 7.5 Z" fill="#1aa04a"/>
<path d="M17.5 11.5 C16.5 16 13 18 9.5 17.8 C6.5 17.6 4.2 16 3 13.5" fill="none" stroke="#f7a030" stroke-width="2.6"/><path d="M0.5 16.5 L1.2 10 L6.8 12.5 Z" fill="#f7a030"/></svg>
<svg style="left:1315px;top:492px" width="16" height="16" viewBox="0 0 16 16">
<rect x="0" y="0" width="16" height="16" rx="2.5" fill="#a80000"/><path d="M4.2 4.2 L11.8 11.8 M11.8 4.2 L4.2 11.8" stroke="#fff" stroke-width="2.8"/></svg>
<div class="a" style="left:985px;top:597px;width:357px;height:40px;background:linear-gradient(#fdfdfd,#ededed);border:1px solid #a8a8a8;border-radius:3px;"></div>
<div class="a" style="left:1343px;top:597px;width:11px;height:40px;background:linear-gradient(#fdfdfd,#ededed);border:1px solid #a8a8a8;border-radius:3px;"></div>
<svg style="left:1343px;top:597px" width="11" height="40" viewBox="0 0 11 40"><path d="M2 19 L9 19 L5.5 22.5 Z" fill="#505050"/></svg>
<svg style="left:990px;top:610px" width="16" height="16" viewBox="0 0 16 16"><path d="M6.5 1.5 V12.5 M1 7 H12" stroke="#000" stroke-width="2"/><circle cx="12" cy="12" r="2.2" fill="none" stroke="#f7941d" stroke-width="1.2"/><path d="M10 11 A2.2 2.2 0 0 1 14 11" fill="none" stroke="#20a050" stroke-width="1.2"/></svg>
<div class="t " style="left:1009px;top:611.30px;font-size:15px;line-height:15px;color:#000;">Extract more rings</div>
<div class="t " style="left:972px;top:659.30px;font-size:15px;line-height:15px;color:#000;">Auto-extraction options</div>
<div class="a" style="left:973px;top:680px;width:393px;height:124px;background:#eaeaea;border:1px solid #d5d5d5;border-radius:2px;"></div>
<div class="t " style="left:984px;top:699.30px;font-size:15px;line-height:15px;color:#000;">Amount of ring to extract</div>
<div class="t " style="left:984px;top:736.30px;font-size:15px;line-height:15px;color:#000;">Number of peak per degree:</div>
<div class="t " style="left:984px;top:770.30px;font-size:15px;line-height:15px;color:#000;">Guess geometry from:</div>
<div class="a" style="left:1176px;top:692px;width:178px;height:28px;background:#fff;border:1px solid #a8a8a8;border-radius:3px;"></div>
<div class="a" style="left:1339px;top:693px;width:1px;height:26px;background:#c4c4c4;"></div>
<div class="a" style="left:1340px;top:693px;width:13px;height:26px;background:linear-gradient(#fafafa,#eeeeee);border-radius:0 2px 2px 0;"></div>
<svg style="left:1340px;top:693px" width="13" height="26" viewBox="0 0 13 26"><path d="M2.5 9.5 L10.5 9.5 L6.5 5.5 Z M2.5 16.5 L10.5 16.5 L6.5 20.5 Z" fill="#505050"/></svg>
<div class="t " style="left:1323.2px;top:699.30px;font-size:15px;line-height:15px;color:#000;">5</div>
<div class="a" style="left:1176px;top:728px;width:178px;height:28px;background:#fff;border:1px solid #a8a8a8;border-radius:3px;"></div>
<div class="a" style="left:1339px;top:729px;width:1px;height:26px;background:#c4c4c4;"></div>
<div class="a" style="left:1340px;top:729px;width:13px;height:26px;background:linear-gradient(#fafafa,#eeeeee);border-radius:0 2px 2px 0;"></div>
<svg style="left:1340px;top:729px" width="13" height="26" viewBox="0 0 13 26"><path d="M2.5 9.5 L10.5 9.5 L6.5 5.5 Z M2.5 16.5 L10.5 16.5 L6.5 20.5 Z" fill="#505050"/></svg>
<div class="t " style="left:1299.8px;top:735.30px;font-size:15px;line-height:15px;color:#000;letter-spacing:1.0px;">1.00</div>
<div class="a" style="left:1176px;top:763px;width:178px;height:29px;background:linear-gradient(#fdfdfd,#ededed);border:1px solid #a8a8a8;border-radius:3px;"></div>
<div class="t " style="left:1181px;top:770.30px;font-size:15px;line-height:15px;color:#000;">Control points</div>
<svg style="left:1336px;top:772px" width="13" height="10" viewBox="0 0 13 10"><path d="M1.5 2.5 L11.5 2.5 L6.5 7 Z" fill="#505050"/></svg>
<div class="a" style="left:972px;top:888px;width:394px;height:40px;background:linear-gradient(#fdfdfd,#ededed);border:1px solid #a8a8a8;border-radius:3px;"></div>
<div class="t " style="left:1146px;top:902.30px;font-size:15px;line-height:15px;color:#000;">Next &gt;</div>
<!--PLOT-->
</body></html>
